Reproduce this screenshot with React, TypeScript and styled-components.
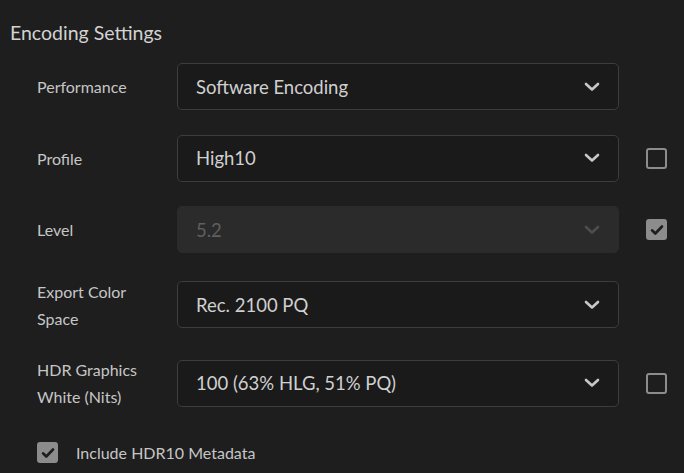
import { FC, Fragment } from "react";
import styled, { createGlobalStyle } from "styled-components";

const GlobalStyle = createGlobalStyle`
  html, body {
    margin: 0;
    padding: 0;
    background: #1e1e1e;
  }
  body {
    font-family: "Lato", "Open Sans", sans-serif;
    color: #cfcfcf;
  }
`;

const Panel = styled.section`
  width: 684px;
  height: 473px;
  box-sizing: border-box;
  padding: 20px 0 0 10px;
  background: #1e1e1e;
  overflow: hidden;
`;

const Title = styled.h2`
  margin: 0;
  font-size: 19.5px;
  font-weight: 400;
  line-height: 26px;
  color: #d2d2d2;
`;

const Form = styled.div`
  display: grid;
  grid-template-columns: 140px 442px 48px;
  row-gap: 24.5px;
  align-items: center;
  margin-top: 17px;
  padding-left: 27px;
`;

const Label = styled.div`
  font-size: 16px;
  line-height: 27px;
  color: #c6c6c6;
`;

const Select = styled.div<{ $disabled?: boolean }>`
  height: 47px;
  box-sizing: border-box;
  display: flex;
  align-items: center;
  justify-content: space-between;
  padding: 0 18px 0 18px;
  border-radius: 5px;
  border: 1px solid ${(p) => (p.$disabled ? "#2b2b2b" : "#3d3d3d")};
  background: ${(p) => (p.$disabled ? "#2b2b2b" : "#1a1a1a")};
  color: ${(p) => (p.$disabled ? "#5f5f5f" : "#d0d0d0")};
  font-size: 18.5px;
`;

const Chevron: FC<{ dim?: boolean }> = ({ dim }) => (
  <svg width="16" height="10" viewBox="0 0 16 10">
    <path
      d="M2 2 L8 7.5 L14 2"
      fill="none"
      stroke={dim ? "#4d4d4d" : "#c8c8c8"}
      strokeWidth="2.6"
      strokeLinecap="round"
      strokeLinejoin="round"
    />
  </svg>
);

const CheckCell = styled.div`
  padding-left: 27px;
  display: flex;
  align-items: center;
`;

const Box = styled.div<{ $checked?: boolean }>`
  width: 21px;
  height: 21px;
  box-sizing: border-box;
  border-radius: 3px;
  border: 2px solid #8c8c8c;
  background: ${(p) => (p.$checked ? "#8c8c8c" : "transparent")};
  display: flex;
  align-items: center;
  justify-content: center;
`;

const Check: FC<{ checked?: boolean }> = ({ checked }) => (
  <Box $checked={checked}>
    {checked ? (
      <svg width="14" height="12" viewBox="0 0 14 12">
        <path
          d="M2 6.3 L5.3 9.5 L12 2.5"
          fill="none"
          stroke="#1e1e1e"
          strokeWidth="2.6"
          strokeLinecap="round"
          strokeLinejoin="round"
        />
      </svg>
    ) : null}
  </Box>
);

const Footer = styled.label`
  display: flex;
  align-items: center;
  gap: 18px;
  margin: 32px 0 0 27px;
  font-size: 16px;
  color: #c6c6c6;
`;

const rows = [
  { label: ["Performance"], value: "Software Encoding" },
  { label: ["Profile"], value: "High10", check: false },
  { label: ["Level"], value: "5.2", check: true, disabled: true },
  { label: ["Export Color", "Space"], value: "Rec. 2100 PQ" },
  {
    label: ["HDR Graphics", "White (Nits)"],
    value: "100 (63% HLG, 51% PQ)",
    check: false,
  },
];

const App: FC = () => {
  return (
    <Panel>
      <GlobalStyle />
      <Title>Encoding Settings</Title>
      <Form>
        {rows.map((row) => (
          <Fragment key={row.label[0]}>
            <Label>
              {row.label.map((l) => (
                <div key={l}>{l}</div>
              ))}
            </Label>
            <Select $disabled={row.disabled}>
              <span>{row.value}</span>
              <Chevron dim={row.disabled} />
            </Select>
            <CheckCell>
              {row.check !== undefined ? <Check checked={row.check} /> : null}
            </CheckCell>
          </Fragment>
        ))}
      </Form>
      <Footer>
        <Check checked />
        Include HDR10 Metadata
      </Footer>
    </Panel>
  );
};

export default App;
